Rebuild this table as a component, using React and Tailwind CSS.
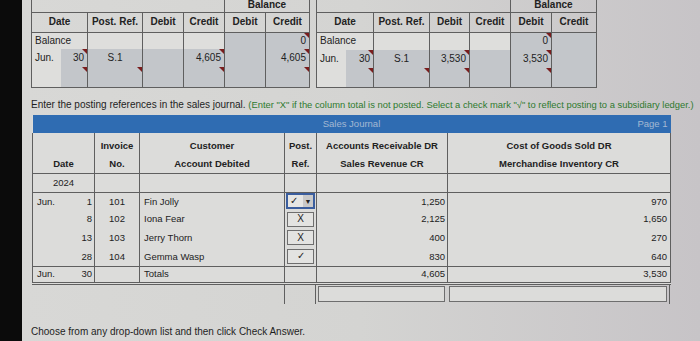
import React from 'react';

const LINE = 'border-[#5f5f5f]';

function Marker() {
    return (
        <span className="absolute right-0 top-0 h-0 w-0 border-l-[5px] border-t-[5px] border-l-transparent border-t-[#7a1d1d]" />
    );
}

// one cell of a top ledger
function LCell({ text, gray, mark, align = 'right', colSpan, className = '' }) {
    return (
        <td
            colSpan={colSpan}
            className={`relative border-x ${LINE} px-[3px] text-${align} ${gray ? 'bg-[#c3c6ca]' : 'bg-[#dededc]'} ${className}`}
        >
            {text}
            {mark && <Marker />}
        </td>
    );
}

function Ledger({ widths, rows }) {
    return (
        <table className="table-fixed border-collapse text-[10px] leading-none text-[#222]">
            <colgroup>
                {widths.map((w, i) => (
                    <col key={i} style={{ width: w }} />
                ))}
            </colgroup>
            <tbody>
                <tr className="h-[12px]">
                    <td colSpan={5} className={`border-x border-b ${LINE}`} />
                    <td colSpan={2} className={`border-x border-b ${LINE} text-center align-top font-bold`}>
                        Balance
                    </td>
                </tr>
                <tr className="h-[20px] font-bold">
                    <td colSpan={2} className={`border ${LINE} text-center`}>Date</td>
                    <td className={`border ${LINE} text-center`}>Post. Ref.</td>
                    <td className={`border ${LINE} text-center`}>Debit</td>
                    <td className={`border ${LINE} text-center`}>Credit</td>
                    <td className={`border ${LINE} text-center`}>Debit</td>
                    <td className={`border ${LINE} text-center`}>Credit</td>
                </tr>
                {rows.map((row, r) => (
                    <tr key={r} className={`${row.h} ${r === rows.length - 1 ? `border-b ${LINE}` : ''}`}>
                        {row.cells.map((c, i) => (
                            <LCell key={i} {...c} />
                        ))}
                    </tr>
                ))}
            </tbody>
        </table>
    );
}

const leftRows = [
    {
        h: 'h-[17px]',
        cells: [
            { text: 'Balance', align: 'left', colSpan: 2 },
            {},
            {},
            {},
            { gray: true },
            { text: '0', gray: true, mark: true },
        ],
    },
    {
        h: 'h-[18px]',
        cells: [
            { text: 'Jun.', align: 'left', className: 'border-r-0' },
            { text: '30', gray: true, mark: true, className: 'border-l-0' },
            { text: 'S.1', gray: true, align: 'center' },
            { gray: true },
            { text: '4,605', gray: true, mark: true },
            { gray: true },
            { text: '4,605', gray: true, mark: true },
        ],
    },
    {
        h: 'h-[20px]',
        cells: [
            { className: 'border-r-0' },
            { gray: true, mark: true, className: 'border-l-0' },
            { gray: true, mark: true },
            { gray: true },
            { gray: true, mark: true },
            { gray: true },
            { gray: true, mark: true },
        ],
    },
];

const rightRows = [
    {
        h: 'h-[17px]',
        cells: [
            { text: 'Balance', align: 'left', colSpan: 2 },
            {},
            {},
            {},
            { text: '0', gray: true, mark: true },
            { gray: true },
        ],
    },
    {
        h: 'h-[18px]',
        cells: [
            { text: 'Jun.', align: 'left', className: 'border-r-0' },
            { text: '30', gray: true, mark: true, className: 'border-l-0' },
            { text: 'S.1', gray: true, align: 'center' },
            { text: '3,530', gray: true, mark: true },
            { gray: true },
            { text: '3,530', gray: true, mark: true },
            { gray: true },
        ],
    },
    {
        h: 'h-[19px]',
        cells: [
            { className: 'border-r-0' },
            { gray: true, mark: true, className: 'border-l-0' },
            { gray: true, mark: true },
            { gray: true, mark: true },
            { gray: true },
            { gray: true, mark: true },
            { gray: true },
        ],
    },
];

const entries = [
    { month: 'Jun.', day: '1', inv: '101', name: 'Fin Jolly', post: 'dropdown', ar: '1,250', cogs: '970', h: 'h-[18px]' },
    { day: '8', inv: '102', name: 'Iona Fear', post: 'X', ar: '2,125', cogs: '1,650', h: 'h-[18px]' },
    { day: '13', inv: '103', name: 'Jerry Thorn', post: 'X', ar: '400', cogs: '270', h: 'h-[19px]' },
    { day: '28', inv: '104', name: 'Gemma Wasp', post: '✓', ar: '830', cogs: '640', h: 'h-[19px]' },
];

function PostBox({ value }) {
    if (value === 'dropdown') {
        return (
            <div className="mx-auto flex h-[16px] w-[29px] items-center justify-between border-2 border-[#3b5e9e] bg-[#e6e6e4] pl-[2px] text-[10px]">
                <span>✓</span>
                <span className="flex h-full w-[10px] items-center justify-center bg-[#c9c9c9] text-[7px]">▼</span>
            </div>
        );
    }
    return (
        <div className="mx-auto flex h-[15px] w-[27px] items-center justify-center border border-[#6e6e6e] bg-[#e3e3e1] text-[10px]">
            {value}
        </div>
    );
}

function SalesJournal() {
    const cell = `border-x ${LINE}`;
    return (
        <div>
            <table className="table-fixed border-collapse bg-[#dcdcda] text-[9.5px] leading-none text-[#222]">
                <colgroup>
                    {[30, 32, 45, 145, 32, 131, 223].map((w, i) => (
                        <col key={i} style={{ width: w }} />
                    ))}
                </colgroup>
                <tbody>
                    <tr className="h-[18px]">
                        <td colSpan={7} className="bg-[#2f6cb2] p-0">
                            <div className="grid grid-cols-3 items-center px-[3px] text-[9.5px] text-[#a3b9d3]">
                                <span />
                                <span className="text-center">Sales Journal</span>
                                <span className="text-right">Page 1</span>
                            </div>
                        </td>
                    </tr>
                    <tr className="h-[40px] font-bold">
                        <td colSpan={2} className={`${cell} border-b pb-[4px] text-center align-bottom`}>Date</td>
                        {[
                            ['Invoice', 'No.'],
                            ['Customer', 'Account Debited'],
                            ['Post.', 'Ref.'],
                            ['Accounts Receivable DR', 'Sales Revenue CR'],
                            ['Cost of Goods Sold DR', 'Merchandise Inventory CR'],
                        ].map(([a, b]) => (
                            <td key={a} className={`${cell} border-b pt-[4px] text-center align-top leading-[18px]`}>
                                <div>{a}</div>
                                <div>{b}</div>
                            </td>
                        ))}
                    </tr>
                    <tr className={`h-[19px] border-b ${LINE}`}>
                        <td colSpan={2} className={`${cell} text-center`}>2024</td>
                        <td className={cell} />
                        <td className={cell} />
                        <td className={cell} />
                        <td className={cell} />
                        <td className={cell} />
                    </tr>
                    {entries.map((e) => (
                        <tr key={e.inv} className={e.h}>
                            <td className={`border-l ${LINE} pl-[4px]`}>{e.month}</td>
                            <td className={`border-r ${LINE} pr-[2px] text-right`}>{e.day}</td>
                            <td className={`${cell} text-center`}>{e.inv}</td>
                            <td className={`${cell} pl-[4px]`}>{e.name}</td>
                            <td className={cell}>
                                <PostBox value={e.post} />
                            </td>
                            <td className={`${cell} pr-[2px] text-right`}>{e.ar}</td>
                            <td className={`${cell} pr-[3px] text-right`}>{e.cogs}</td>
                        </tr>
                    ))}
                    <tr className={`h-[17px] border-t border-b-[3px] border-double ${LINE}`}>
                        <td className={`border-l ${LINE} pl-[4px]`}>Jun.</td>
                        <td className={`border-r ${LINE} pr-[2px] text-right`}>30</td>
                        <td className={cell} />
                        <td className={`${cell} pl-[4px]`}>Totals</td>
                        <td className={cell} />
                        <td className={`${cell} pr-[2px] text-right`}>4,605</td>
                        <td className={`${cell} pr-[3px] text-right`}>3,530</td>
                    </tr>
                </tbody>
            </table>
            {/* total posting inputs under the double rule */}
            <div className="flex h-[19px]">
                <div className="w-[252px]" />
                <div className={`w-[32px] border-x ${LINE}`} />
                <div className="w-[131px] px-[2px] pt-[1px]">
                    <div className="h-[16px] border border-[#6e6e6e] bg-[#dcdcda]" />
                </div>
                <div className={`w-[223px] border-r ${LINE} px-[2px] pt-[1px]`}>
                    <div className="h-[16px] border border-[#6e6e6e] bg-[#dcdcda]" />
                </div>
            </div>
        </div>
    );
}

export default function App() {
    return (
        <div className="flex h-[341px] w-[700px] overflow-hidden font-['Liberation_Sans',Arial,sans-serif]">
            <div className="w-[22px] shrink-0 bg-[#0b0b0b]" />
            <div className="flex flex-1 flex-col bg-gradient-to-r from-[#d8d8d6] via-[#d4d4d2] to-[#c7c4c7] pl-[9px]">
                <div className="flex gap-[6px]">
                    <Ledger widths={[29, 27, 55, 41, 41, 41, 44]} rows={leftRows} />
                    <Ledger widths={[29, 28, 56, 40, 41, 41, 45]} rows={rightRows} />
                </div>
                <p className="mt-[11px] whitespace-nowrap text-[10px] leading-[12px] text-[#1e1e1e]">
                    Enter the posting references in the sales journal.{' '}
                    <span className="text-[9.4px] text-[#2e7a2e]">
                        (Enter "X" if the column total is not posted. Select a check mark "√" to reflect posting to a
                        subsidiary ledger.)
                    </span>
                </p>
                <div className="mt-[4px] pl-[1px]">
                    <SalesJournal />
                </div>
                <p className="mt-[22px] text-[10px] leading-[12px] text-[#1e1e1e]">
                    Choose from any drop-down list and then click Check Answer.
                </p>
                <div className="mt-[3px] border-t border-[#9a9a9a]" />
            </div>
        </div>
    );
}
